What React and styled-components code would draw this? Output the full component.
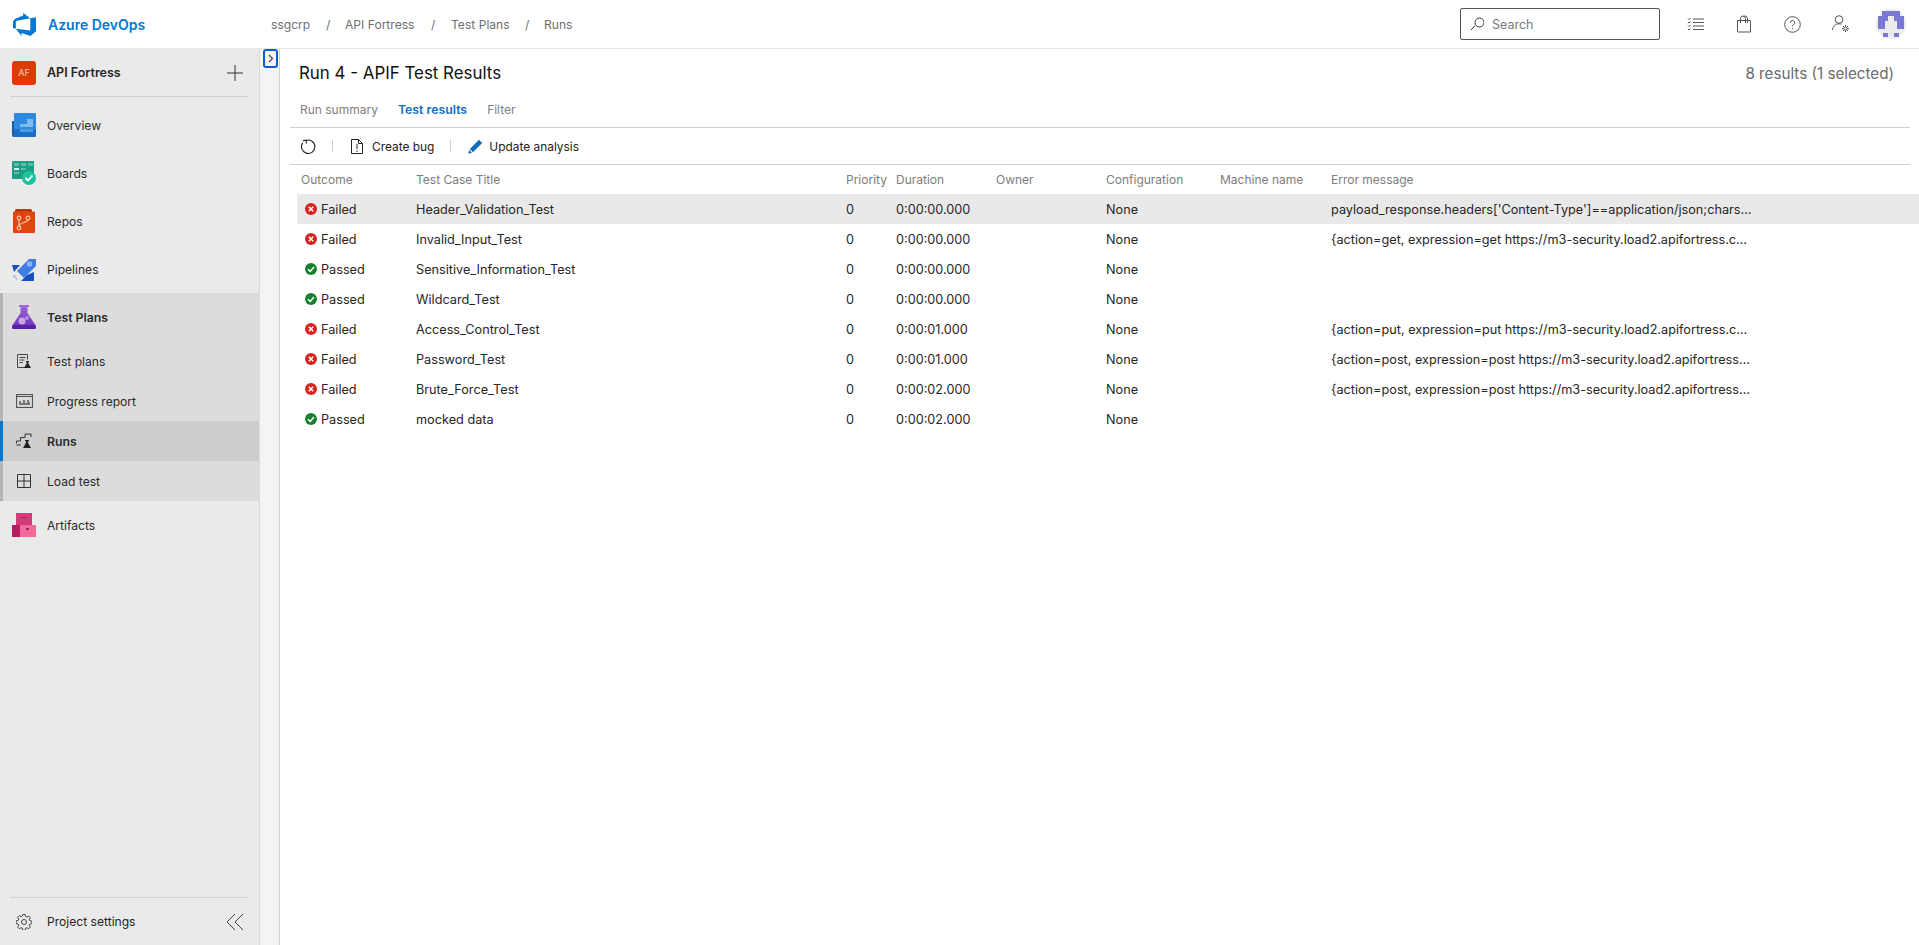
import React from 'react';
import styled, { createGlobalStyle } from 'styled-components';

const GlobalStyle = createGlobalStyle`
  html, body, #root {
    margin: 0;
    height: 100%;
  }

  body {
    font-family: Inter, "Liberation Sans", Arial, sans-serif;
    font-size: 13px;
    color: #262626;
    background: #fff;
    overflow: hidden;
  }
`;

const Page = styled.div`
  display: flex;
  flex-direction: column;
  height: 945px;
`;

const TopBar = styled.header`
  display: flex;
  align-items: center;
  flex: 0 0 49px;
  box-sizing: border-box;
  border-bottom: 1px solid #e6e6e6;
`;

const Brand = styled.div`
  display: flex;
  align-items: center;
  width: 271px;
  padding-left: 13px;
  box-sizing: border-box;
  gap: 12px;
  color: #0078d4;
  font-size: 14px;
  font-weight: 600;
`;

const Crumbs = styled.nav`
  display: flex;
  align-items: center;
  color: #6f6f6f;
  font-size: 12.1px;
  flex: 1;
`;

const Crumb = styled.span`
  width: ${(p) => p.$width}px;
`;

const SearchBox = styled.div`
  display: flex;
  align-items: center;
  gap: 8px;
  width: 200px;
  height: 32px;
  box-sizing: border-box;
  padding-left: 9px;
  border: 1px solid #555;
  border-radius: 2px;
  color: #7a7a7a;
  font-size: 12.5px;
`;

const TopIcons = styled.div`
  display: flex;
  align-items: center;
  gap: 31px;
  margin-left: 27px;
  margin-right: 13px;
`;

const Avatar = styled.svg`
  margin-left: -5px;
`;

const Body = styled.div`
  display: flex;
  flex: 1;
  min-height: 0;
`;

const Sidebar = styled.aside`
  display: flex;
  flex-direction: column;
  width: 260px;
  box-sizing: border-box;
  background: #eaeaea;
  border-right: 1px solid #dcdcdc;
`;

const ProjectRow = styled.div`
  display: flex;
  align-items: center;
  flex: 0 0 47px;
  padding: 0 16px 0 12px;
  font-weight: 600;
  font-size: 12.5px;
`;

const ProjectBadge = styled.div`
  display: flex;
  align-items: center;
  justify-content: center;
  width: 24px;
  height: 24px;
  margin-right: 11px;
  border-radius: 3px;
  background: #dd3b04;
  color: #f6b9a0;
  font-size: 9px;
  font-weight: 500;
`;

const Grow = styled.span`
  flex: 1;
`;

const SideLine = styled.div`
  height: 1px;
  margin: 0 10px;
  background: #d2d2d2;
`;

const NavList = styled.div`
  display: flex;
  flex-direction: column;
  padding-top: 4px;
`;

const NavItem = styled.div`
  display: flex;
  align-items: center;
  height: ${(p) => p.$height || 48}px;
  box-sizing: border-box;
  padding-left: 12px;
  gap: 11px;
  font-size: ${(p) => (p.$bold ? 12.3 : 12.1)}px;
  font-weight: ${(p) => (p.$bold ? 600 : 400)};
  color: #2b2b2b;
`;

const NavGroup = styled.div`
  background: #dcdcdc;
  box-shadow: inset 3px 0 0 #b4b4b4;
`;

const SubItem = styled(NavItem)`
  background: ${(p) => (p.$active ? '#cdcdcd' : 'transparent')};
  box-shadow: ${(p) => (p.$active ? 'inset 3px 0 0 #0078d4' : 'none')};
`;

const IconSlot = styled.span`
  display: flex;
  align-items: center;
  justify-content: center;
  width: 24px;
  height: 24px;
`;

const SideFooter = styled.div`
  margin-top: auto;
`;

const FooterRow = styled.div`
  display: flex;
  align-items: center;
  height: 47px;
  padding: 0 16px 0 12px;
  gap: 11px;
  font-size: 12.1px;
`;

const Strip = styled.div`
  position: relative;
  width: 20px;
  box-sizing: border-box;
  background: #f4f4f4;
  border-right: 1px solid #d0d0d0;
`;

const Toggle = styled.div`
  position: absolute;
  top: 0;
  left: 3px;
  display: flex;
  align-items: center;
  justify-content: center;
  width: 15px;
  height: 19px;
  box-sizing: border-box;
  border: 2px solid #0a5fd0;
  border-radius: 3px;
  background: #f4f4f4;
`;

const Main = styled.main`
  flex: 1;
  min-width: 0;
  padding-left: 10px;
`;

const TitleRow = styled.div`
  display: flex;
  align-items: center;
  justify-content: space-between;
  height: 48px;
  padding: 0 25px 0 9px;
`;

const Title = styled.h1`
  margin: 0;
  font-size: 16.9px;
  font-weight: 400;
  color: #111;
`;

const Count = styled.div`
  font-size: 15.2px;
  color: #6b6b6b;
`;

const Tabs = styled.div`
  display: flex;
  align-items: center;
  height: 24px;
  margin-right: 9px;
  padding: 0 0 6px 10px;
  border-bottom: 1px solid #cfcfcf;
  font-size: 12px;
  color: #808080;
`;

const Tab = styled.span`
  margin-right: 20px;
  color: ${(p) => (p.$active ? '#106ebe' : '#808080')};
  font-weight: ${(p) => (p.$active ? 600 : 400)};
  font-size: ${(p) => (p.$active ? 12.3 : 12)}px;
`;

const Toolbar = styled.div`
  display: flex;
  align-items: center;
  height: 36px;
  margin-right: 9px;
  padding-left: 11px;
  border-bottom: 1px solid #cfcfcf;
  font-size: 11.9px;
  color: #222;
`;

const ToolSep = styled.span`
  width: 1px;
  height: 12px;
  margin: 0 ${(p) => p.$after}px 0 16px;
  background: #cfcfcf;
`;

const ToolButton = styled.span`
  display: flex;
  align-items: center;
  gap: ${(p) => p.$gap}px;
`;

const columns = '115px 430px 50px 100px 110px 114px 111px 1fr';

const HeaderRow = styled.div`
  display: grid;
  grid-template-columns: ${columns};
  align-items: center;
  height: 29px;
  padding-left: 11px;
  font-size: 12px;
  color: #7d7d7d;
`;

const Row = styled.div`
  display: grid;
  grid-template-columns: ${columns};
  align-items: center;
  height: 30px;
  margin-left: 7px;
  padding-left: 4px;
  font-size: 12.7px;
  color: #262626;
  background: ${(p) => (p.$selected ? '#e9e9e9' : 'transparent')};
`;

const Outcome = styled.span`
  display: flex;
  align-items: center;
  gap: 4px;
  padding-left: 4px;
`;

const results = [
  { outcome: 'Failed', title: 'Header_Validation_Test', duration: '0:00:00.000', error: "payload_response.headers['Content-Type']==application/json;chars…" },
  { outcome: 'Failed', title: 'Invalid_Input_Test', duration: '0:00:00.000', error: '{action=get, expression=get https://m3-security.load2.apifortress.c…' },
  { outcome: 'Passed', title: 'Sensitive_Information_Test', duration: '0:00:00.000', error: '' },
  { outcome: 'Passed', title: 'Wildcard_Test', duration: '0:00:00.000', error: '' },
  { outcome: 'Failed', title: 'Access_Control_Test', duration: '0:00:01.000', error: '{action=put, expression=put https://m3-security.load2.apifortress.c…' },
  { outcome: 'Failed', title: 'Password_Test', duration: '0:00:01.000', error: '{action=post, expression=post https://m3-security.load2.apifortress…' },
  { outcome: 'Failed', title: 'Brute_Force_Test', duration: '0:00:02.000', error: '{action=post, expression=post https://m3-security.load2.apifortress…' },
  { outcome: 'Passed', title: 'mocked data', duration: '0:00:02.000', error: '' },
];

function DevOpsLogo() {
  return (
    <svg width="23" height="23" viewBox="0 0 24 24" fill="#0078d4">
      <path d="M0 8.877L2.247 5.91l8.405-3.416V.022l7.37 5.393L2.966 8.338v8.225L0 15.707zm24-4.45v14.651l-5.753 4.9-9.303-3.057v3.056l-5.978-7.416 15.057 1.798V5.415z" />
    </svg>
  );
}

function Line({ d, size = 20, width = 1, color = '#555', box = 20 }) {
  return (
    <svg width={size} height={size} viewBox={`0 0 ${box} ${box}`} fill="none" stroke={color} strokeWidth={width}>
      <path d={d} />
    </svg>
  );
}

function OverviewIcon() {
  return (
    <svg width="24" height="24" viewBox="0 0 24 24">
      <path d="M0 8h6v16H2a2 2 0 0 1-2-2z" fill="#125ea8" />
      <rect x="2" y="0" width="22" height="22" rx="1" fill="#2f8be0" />
      <rect x="2" y="16" width="22" height="8" rx="1" fill="#1a6fc4" />
      <path d="M8 14v-3h7V6h6v8z" fill="#7cbcf0" />
      <path d="M8 16h13v3H8z" fill="#4a9ae6" />
    </svg>
  );
}

function BoardsIcon() {
  return (
    <svg width="24" height="24" viewBox="0 0 24 24">
      <rect x="0" y="0" width="22" height="18" rx="1" fill="#1f9e83" />
      <path d="M2 2h5v3H2zM9 2h5v3H9zM16 2h5v3h-5z" fill="#55c0a8" />
      <path d="M2 7h5v2H2z" fill="#d9f3ec" />
      <path d="M2 11h5v2H2zM9 7h5v2H9z" fill="#55c0a8" />
      <circle cx="17" cy="17" r="7" fill="#1cc4a0" />
      <path d="M13.5 17l2.5 2.5 4.5-5" fill="none" stroke="#fff" strokeWidth="1.8" />
    </svg>
  );
}

function ReposIcon() {
  return (
    <svg width="24" height="24" viewBox="0 0 24 24">
      <path d="M3 3V1.5A1.5 1.5 0 0 1 4.500 0h14A1.5 1.500 0 0 1 20 1.500V3z" fill="#b8360c" />
      <rect x="1" y="2.500" width="22" height="21.500" rx="1" fill="#e0470f" />
      <g fill="none" stroke="#f6c3ae" strokeWidth="1.200">
        <circle cx="7" cy="9" r="1.800" />
        <circle cx="16" cy="9" r="1.800" />
        <circle cx="7" cy="19" r="1.800" />
        <path d="M7 10.800v6.400M16 10.800c0 3-9 2.500-9 6.400" />
      </g>
    </svg>
  );
}

function PipelinesIcon() {
  return (
    <svg width="24" height="24" viewBox="0 0 24 24">
      <path d="M0 8h8L2 15z" fill="#1b4fc0" />
      <path d="M9 24h13V15l-7 3z" fill="#1b4fc0" />
      <path d="M5 14L17 2h7v7L12 21z" fill="#3f7ce6" />
      <circle cx="17.500" cy="7" r="2.800" fill="#8ab4f5" />
      <path d="M1 18h3l-1 1 3 3-1 1-3-3-1 1z" fill="#a9c4f2" />
    </svg>
  );
}

function FlaskIcon() {
  return (
    <svg width="24" height="24" viewBox="0 0 24 24">
      <defs>
        <linearGradient id="flask" x1="0" y1="0" x2="0" y2="1">
          <stop offset="0" stopColor="#a06ad8" />
          <stop offset="1" stopColor="#6a2bb8" />
        </linearGradient>
      </defs>
      <path d="M7 0h10v2h-1.500v6L24 21a2 2 0 0 1-2 3H2a2 2 0 0 1-2-3L8.500 8V2H7z" fill="url(#flask)" />
      <circle cx="10" cy="16" r="3.500" fill="#c9a6ea" />
      <circle cx="15" cy="13" r="2" fill="#b78be2" />
      <path d="M1 20h22l1 2a2 2 0 0 1-2 2H2a2 2 0 0 1-2-2z" fill="#5a1fa6" />
    </svg>
  );
}

function ArtifactsIcon() {
  return (
    <svg width="24" height="24" viewBox="0 0 24 24">
      <rect x="4" y="0" width="16" height="13" fill="#d23a78" />
      <rect x="0" y="12" width="9" height="12" fill="#b81c60" />
      <rect x="8" y="12" width="16" height="12" fill="#f06a9c" />
      <path d="M9 4h5v1H9zM14 15h3v2h-3z" fill="#a81d5a" />
    </svg>
  );
}

function TestPlansSub() {
  return (
    <svg width="16" height="16" viewBox="0 0 16 16">
      <path d="M9 14.500H1.500v-13h10v5M3.500 4.500h6M3.500 7h5M3.500 9.500H7" fill="none" stroke="#444" strokeWidth="1" />
      <path d="M10 8h3v1h-.6v1.500L15 15H8l2.600-4.500V9H10z" fill="#222" />
    </svg>
  );
}

function ProgressSub() {
  return (
    <svg width="17" height="14" viewBox="0 0 17 14">
      <rect x="0.500" y="0.500" width="16" height="13" fill="none" stroke="#555" strokeWidth="1.200" />
      <path d="M1 2.500h15" stroke="#555" strokeWidth="1" />
      <path d="M3 11V7h2v2h2V6h2v3h2V6h2v2h1v3z" fill="#777" />
    </svg>
  );
}

function RunsSub() {
  return (
    <svg width="16" height="16" viewBox="0 0 16 16">
      <path d="M.500 10.500V8h4V4.500H9V1h6v3M5 12H.500" fill="none" stroke="#333" strokeWidth="1" />
      <path d="M9 7h4v1h-.8v2l2.800 5H7l2.800-5V8H9z" fill="#222" />
    </svg>
  );
}

function LoadSub() {
  return (
    <svg width="14" height="14" viewBox="0 0 14 14" fill="none" stroke="#333" strokeWidth="1">
      <path d="M.500.500h13v13H.500zM7 .500v13M.500 7h13" />
    </svg>
  );
}

function OutcomeIcon({ failed }) {
  return (
    <svg width="12" height="12" viewBox="0 0 12 12">
      <circle cx="6" cy="6" r="6" fill={failed ? '#d8231f' : '#15812b'} />
      {failed ? (
        <path d="M3.800 3.800l4.400 4.400M8.200 3.800L3.800 8.200" stroke="#fff" strokeWidth="1.500" />
      ) : (
        <path d="M3 6.300l2.200 2.100 3.800-4.300" fill="none" stroke="#fff" strokeWidth="1.500" />
      )}
    </svg>
  );
}

function App() {
  return (
    <Page>
      <GlobalStyle />
      <TopBar>
        <Brand>
          <DevOpsLogo />
          Azure DevOps
        </Brand>
        <Crumbs>
          <Crumb $width={55}>ssgcrp</Crumb>
          <Crumb $width={19}>/</Crumb>
          <Crumb $width={86}>API Fortress</Crumb>
          <Crumb $width={20}>/</Crumb>
          <Crumb $width={74}>Test Plans</Crumb>
          <Crumb $width={19}>/</Crumb>
          <Crumb $width={40}>Runs</Crumb>
        </Crumbs>
        <SearchBox>
          <Line size={14} box={14} color="#333" d="M1 13l4-4.500M5 5.500a4.500 4.500 0 1 0 9 0 4.500 4.500 0 1 0-9 0" />
          Search
        </SearchBox>
        <TopIcons>
          <Line size={17} box={17} d="M6 3h11M6 6.500h11M6 10h11M6 13.500h11M1 2.500l1 1 1.500-1.500M1 6l1 1 1.500-1.500M1 9.500l1 1 1.500-1.500M1 13l1 1 1.500-1.500" />
          <Line size={18} box={18} d="M2.500 5.500h12.500a.5.5 0 0 1 .5.5v11H3a.5.5 0 0 1-.5-.5zM5.500 8V3.500a2.500 2.500 0 0 1 5 0V8M8.500 1.500a2.500 2.500 0 0 1 4 2V8" />
          <svg width="17" height="17" viewBox="0 0 17 17" fill="none" stroke="#555">
            <circle cx="8.500" cy="8.500" r="7.800" />
            <path d="M6.300 6.700a2.200 2.200 0 1 1 3.300 1.900c-.8.500-1.100.9-1.100 1.800M8.500 12v1" />
          </svg>
          <svg width="18" height="18" viewBox="0 0 18 18" fill="none" stroke="#555">
            <circle cx="7" cy="4.500" r="3.800" />
            <path d="M.500 15c.300-3.500 2.500-6.200 6.500-6.200 1 0 1.800.100 2.500.400" />
            <circle cx="13.500" cy="13.500" r="1.600" />
            <path d="M13.500 10v1.800M13.500 15.200V17M10 13.500h1.800M15.200 13.500H17M11 11l1.200 1.200M14.800 14.800l1.200 1.200M16 11l-1.200 1.200M12.200 14.800L11 16" />
          </svg>
          <Avatar width="30" height="30" viewBox="0 0 30 30">
            <circle cx="15" cy="15" r="15" fill="#ececec" />
            <path d="M6 2h18v5h-3v5h-3V7h-6v5H9V7H6zM2 7h7v13H2zM21 7h7v13h-7zM7 24h5v4H7zM18 24h5v4h-5z" fill="#7a78d6" />
          </Avatar>
        </TopIcons>
      </TopBar>
      <Body>
        <Sidebar>
          <ProjectRow>
            <ProjectBadge>AF</ProjectBadge>
            API Fortress
            <Grow />
            <Line size={16} box={16} color="#333" d="M8 0v16M0 8h16" />
          </ProjectRow>
          <SideLine />
          <NavList>
            <NavItem><OverviewIcon />Overview</NavItem>
            <NavItem><BoardsIcon />Boards</NavItem>
            <NavItem><ReposIcon />Repos</NavItem>
            <NavItem><PipelinesIcon />Pipelines</NavItem>
            <NavGroup>
              <NavItem $bold><FlaskIcon />Test Plans</NavItem>
              <SubItem $height={40}><IconSlot><TestPlansSub /></IconSlot>Test plans</SubItem>
              <SubItem $height={40}><IconSlot><ProgressSub /></IconSlot>Progress report</SubItem>
              <SubItem $height={40} $bold $active><IconSlot><RunsSub /></IconSlot>Runs</SubItem>
              <SubItem $height={40}><IconSlot><LoadSub /></IconSlot>Load test</SubItem>
            </NavGroup>
            <NavItem><ArtifactsIcon />Artifacts</NavItem>
          </NavList>
          <SideFooter>
            <SideLine />
            <FooterRow>
              <IconSlot>
                <svg width="16" height="16" viewBox="0 0 16 16" fill="none" stroke="#444">
                  <circle cx="8" cy="8" r="2.500" />
                  <path d="M6.800.500h2.400l.4 2 1.300.6 1.800-1.100 1.700 1.700-1.100 1.800.6 1.300 2 .4v2.400l-2 .4-.6 1.300 1.100 1.800-1.700 1.700-1.800-1.100-1.300.6-.4 2H6.800l-.4-2-1.300-.6-1.800 1.100-1.700-1.700 1.100-1.800-.6-1.300-2-.4V6.800l2-.4.6-1.300L1.600 3.300l1.700-1.700 1.800 1.100 1.300-.6z" />
                </svg>
              </IconSlot>
              Project settings
              <Grow />
              <Line size={16} box={16} color="#444" d="M8 0L0 8l8 8M16 0L8 8l8 8" />
            </FooterRow>
          </SideFooter>
        </Sidebar>
        <Strip>
          <Toggle>
            <Line size={9} box={9} color="#444" width={1.2} d="M3 1l3.500 3.500L3 8" />
          </Toggle>
        </Strip>
        <Main>
          <TitleRow>
            <Title>Run 4 - APIF Test Results</Title>
            <Count>8 results (1 selected)</Count>
          </TitleRow>
          <Tabs>
            <Tab>Run summary</Tab>
            <Tab $active>Test results</Tab>
            <Tab>Filter</Tab>
          </Tabs>
          <Toolbar>
            <Line size={15} box={15} color="#222" width={1.1} d="M5 1.400a6.700 6.700 0 1 1-3.300 2.500M5.500 4.500L5 1.200 1.700 1.700" />
            <ToolSep $after={18} />
            <ToolButton $gap={9}>
              <svg width="12" height="15" viewBox="0 0 12 15" fill="none" stroke="#222">
                <path d="M.500.500h7l4 4v10H.500zM7.500.500v4h4M6 5v5M6 11.500V13" />
              </svg>
              Create bug
            </ToolButton>
            <ToolSep $after={17} />
            <ToolButton $gap={6}>
              <svg width="15" height="15" viewBox="0 0 15 15">
                <path d="M11 .800l3.200 3.200L5 13.200 1.800 10z" fill="#0f6cbd" />
                <path d="M1.200 11l2.800 2.800-3.800 1z" fill="#0f6cbd" />
              </svg>
              Update analysis
            </ToolButton>
          </Toolbar>
          <HeaderRow>
            <span>Outcome</span>
            <span>Test Case Title</span>
            <span>Priority</span>
            <span>Duration</span>
            <span>Owner</span>
            <span>Configuration</span>
            <span>Machine name</span>
            <span>Error message</span>
          </HeaderRow>
          {results.map((result, index) => (
            <Row key={result.title} $selected={index === 0}>
              <Outcome>
                <OutcomeIcon failed={result.outcome === 'Failed'} />
                {result.outcome}
              </Outcome>
              <span>{result.title}</span>
              <span>0</span>
              <span>{result.duration}</span>
              <span />
              <span>None</span>
              <span />
              <span>{result.error}</span>
            </Row>
          ))}
        </Main>
      </Body>
    </Page>
  );
}

export default App;
